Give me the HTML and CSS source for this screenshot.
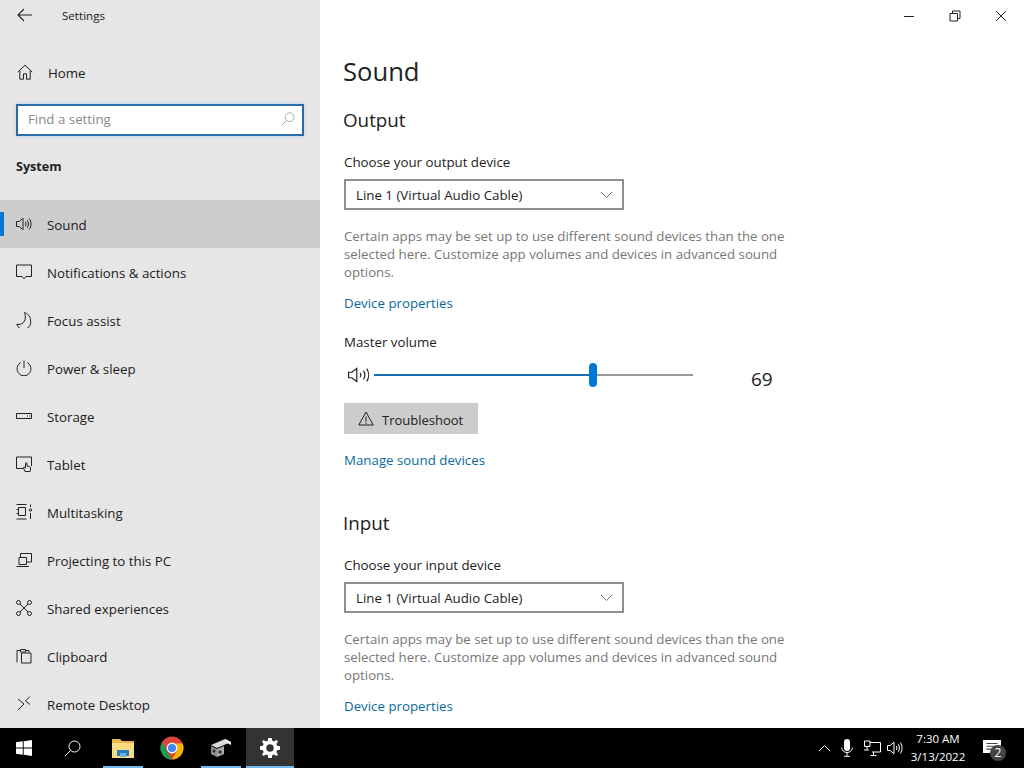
FILE: index.html
```html
<!DOCTYPE html>
<html lang="en">
<head>
<meta charset="utf-8">
<title>Settings</title>
<link rel="stylesheet" href="styles.css">
</head>
<body>
<div class="window">
  <aside class="sidebar">
    <div class="titlebar">
      <svg class="back" width="16" height="14" viewBox="0 0 16 14"><path d="M7 1 1 7l6 6M1 7h14"/></svg>
      <span class="app-title">Settings</span>
    </div>
    <a class="home">
      <svg class="ico" width="16" height="16" viewBox="0 0 16 16"><path d="M.8 8 8 1.2 15.2 8M2.8 6.5v8.7h3.7V9.8h3v5.4h3.7V6.5"/></svg>
      <span>Home</span>
    </a>
    <div class="search">
      <span class="placeholder">Find a setting</span>
      <svg class="search-ico" width="14" height="14" viewBox="0 0 14 14"><circle cx="8.6" cy="5.2" r="4.4"/><path d="M5.5 8.3.7 13.3"/></svg>
    </div>
    <div class="group">System</div>
    <nav class="nav">
      <a class="item active">
        <svg class="ico" width="16" height="16" viewBox="0 0 16 16"><path d="M.5 5.5h2.700L7 2.200v11.600L3.200 10.500H.500zM9.300 6c.8 1.200.8 2.800 0 4M11.200 4.200c1.600 2.200 1.600 5.400 0 7.600M13.200 2.500c2.400 3.200 2.400 7.800 0 11"/></svg>
        <span>Sound</span>
      </a>
      <a class="item">
        <svg class="ico" width="16" height="16" viewBox="0 0 16 16"><path d="M.5 1h15v11.500H10L8 14.800l-2-2.300H.500z"/></svg>
        <span>Notifications &amp; actions</span>
      </a>
      <a class="item">
        <svg class="ico" width="16" height="16" viewBox="0 0 16 16"><path d="M8.500.5c2.700 1 6 3.300 6 7.500a6.700 6.700 0 0 1-13.800 4.300c3.500.6 6.500-.6 7.800-3.300C9.700 6.700 9.500 3 8.500.5z"/></svg>
        <span>Focus assist</span>
      </a>
      <a class="item">
        <svg class="ico" width="16" height="16" viewBox="0 0 16 16"><path d="M8 .5v7.500M4.700 2.600a7 7 0 1 0 6.600 0"/></svg>
        <span>Power &amp; sleep</span>
      </a>
      <a class="item">
        <svg class="ico" width="16" height="16" viewBox="0 0 16 16"><path d="M.5 5.500h15v5h-15z"/><path d="M11 8h1M13 8h1"/></svg>
        <span>Storage</span>
      </a>
      <a class="item">
        <svg class="ico" width="16" height="16" viewBox="0 0 16 16"><path d="M7 12.500H.500V1h15v9"/><path d="M9 15.500 7.500 12c-.3-1 .5-1.300 1-.8l1 1V7.500c0-1.200 1.500-1.200 1.500 0V10l2.500.5c.8.200 1 .8 1 1.500v2l-.5 1.500z"/></svg>
        <span>Tablet</span>
      </a>
      <a class="item">
        <svg class="ico" width="16" height="16" viewBox="0 0 16 16"><path d="M.5.500h10M.500 15h10M2.500 3.500h7v8h-7zM.500 5.500h2M.500 9.500h2M14.500.500v2.500M14.500 9v6"/><circle cx="14.500" cy="6" r="1.200"/></svg>
        <span>Multitasking</span>
      </a>
      <a class="item">
        <svg class="ico" width="16" height="16" viewBox="0 0 16 16"><path d="M4.500 5V1.500h11v8.500H11M3 5.500h7.500v7H3zM.500 14.500h12.500"/></svg>
        <span>Projecting to this PC</span>
      </a>
      <a class="item">
        <svg class="ico" width="16" height="16" viewBox="0 0 16 16"><circle cx="2.500" cy="2.500" r="2"/><circle cx="13.500" cy="2.500" r="2"/><circle cx="2.500" cy="13.500" r="2"/><circle cx="13.500" cy="13.500" r="2"/><path d="M4 4l8 8M12 4l-8 8"/></svg>
        <span>Shared experiences</span>
      </a>
      <a class="item">
        <svg class="ico" width="16" height="16" viewBox="0 0 16 16"><path d="M1 14.500V2.500h3M10 2.500h3v2M5.500 5h9.500v10H5.500zM4.500 4h5V1.500h-5z"/></svg>
        <span>Clipboard</span>
      </a>
      <a class="item">
        <svg class="ico" width="16" height="16" viewBox="0 0 16 16"><path d="M2 3l6 5-6 6M14 .5 9.500 5l4.500 3.500"/></svg>
        <span>Remote Desktop</span>
      </a>
    </nav>
  </aside>

  <main class="content">
    <div class="controls">
      <svg class="ctl" width="12" height="12" viewBox="0 0 12 12"><path d="M1 6.500h10"/></svg>
      <svg class="ctl" width="12" height="12" viewBox="0 0 12 12"><path d="M1 3.500h7.500V11H1zM3.500 3.500V1H11v7.500H8.500"/></svg>
      <svg class="ctl" width="12" height="12" viewBox="0 0 12 12"><path d="M1 1l10 10M11 1 1 11"/></svg>
    </div>
    <h1 class="page-title">Sound</h1>
    <h2 class="section first">Output</h2>
    <div class="label">Choose your output device</div>
    <div class="select">
      <span>Line 1 (Virtual Audio Cable)</span>
      <svg class="chev" width="13" height="8" viewBox="0 0 13 8"><path d="M1 1l5.500 5.500L12 1"/></svg>
    </div>
    <p class="help">Certain apps may be set up to use different sound devices than the one selected here. Customize app volumes and devices in advanced sound options.</p>
    <a class="link">Device properties</a>
    <div class="label master">Master volume</div>
    <div class="volume">
      <svg class="ico vol-ico" width="22" height="18" viewBox="0 0 20 16"><path d="M.5 5.500h3L8 2v12l-4.500-3.500h-3zM11 6c.8 1.200.8 2.800 0 4M14 4c1.600 2.400 1.600 5.600 0 8M17 2.200c2.300 3.400 2.300 8.200 0 11.600"/></svg>
      <div class="slider">
        <div class="fill" style="width:67.5%"></div>
        <div class="rest"></div>
        <div class="thumb" style="left:67.4%"></div>
      </div>
      <span class="value">69</span>
    </div>
    <button class="trouble">
      <svg class="ico" width="16" height="15" viewBox="0 0 16 15"><path d="M8 1 15.200 14H.800zM8 5.500v5M8 11.500v1.300"/></svg>
      <span>Troubleshoot</span>
    </button>
    <a class="link manage">Manage sound devices</a>
    <h2 class="section second">Input</h2>
    <div class="label">Choose your input device</div>
    <div class="select">
      <span>Line 1 (Virtual Audio Cable)</span>
      <svg class="chev" width="13" height="8" viewBox="0 0 13 8"><path d="M1 1l5.500 5.500L12 1"/></svg>
    </div>
    <p class="help">Certain apps may be set up to use different sound devices than the one selected here. Customize app volumes and devices in advanced sound options.</p>
    <a class="link">Device properties</a>
  </main>
</div>

<footer class="taskbar">
  <div class="tb-left">
    <div class="tb-btn">
      <svg width="16" height="16" viewBox="0 0 16 16"><path class="white" d="M0 2.300 6.800 1.300v6.300H0zM7.700 1.200 16 0v7.600H7.700zM0 8.500h6.800v6.300L0 13.800zM7.700 8.500H16V16l-8.300-1.200z"/></svg>
    </div>
    <div class="tb-btn">
      <svg class="line-w" width="17" height="17" viewBox="0 0 17 17"><circle cx="10.500" cy="6.500" r="5.500"/><path d="M6.500 10.500.800 16.200"/></svg>
    </div>
    <div class="tb-apps">
      <div class="tb-btn open short">
        <svg width="22" height="20" viewBox="0 0 22 20"><path fill="#e8b64a" d="M0 1h8l2 2h12v3H0z"/><path fill="#f8dc84" d="M0 5h22v15H0z"/><path fill="#2b7cc4" d="M5 12h12v6h-3v-3H8v3H5z"/><path fill="#6fb1dd" d="M8 15h6v4H8z"/></svg>
      </div>
      <div class="tb-btn">
        <svg width="24" height="24" viewBox="0 0 24 24"><circle cx="12" cy="12" r="11.500" fill="#db4437"/><path fill="#0f9d58" d="M12 23.500A11.500 11.500 0 0 1 2 6.300L7 14.900l4.500 8.600z"/><path fill="#f4b400" d="M22.500 7.400A11.500 11.500 0 0 1 12 23.500L16.500 15 12 7.400z"/><circle cx="12" cy="12" r="5.400" fill="#fff"/><circle cx="12" cy="12" r="4.100" fill="#4285f4"/></svg>
      </div>
      <div class="tb-btn open short">
        <svg width="22" height="20" viewBox="0 0 22 20"><path fill="#d9d9d9" d="M1 7 15 1l6 3-14 6z"/><path fill="#8c8c8c" d="M1 8l6 3v8l-6-3z"/><path fill="#a8a8a8" d="M7 11l7-3v8l-7 3z"/><path fill="#f0f0f0" d="M15 1l6 3v3l-6-3z"/><circle cx="4" cy="13" r="1.500" fill="#333"/><circle cx="10" cy="14" r="1.800" fill="#333"/></svg>
      </div>
      <div class="tb-btn open current">
        <svg width="20" height="20" viewBox="0 0 20 20"><path class="white" fill-rule="evenodd" d="M8.200 0h3.600l.5 2.800 1.700.7L16.400 2 18 3.600l-1.600 2.400.7 1.700 2.900.5v3.600l-2.900.5-.7 1.700 1.600 2.400-1.600 1.600-2.400-1.600-1.700.7-.5 2.900H8.200l-.5-2.900-1.700-.7-2.400 1.600L2 16.400 3.600 14l-.7-1.700L0 11.800V8.200l2.900-.5.700-1.700L2 3.600 3.600 2 6 3.500l1.700-.7zM10 6.300a3.700 3.700 0 1 0 0 7.400 3.700 3.700 0 0 0 0-7.400z"/></svg>
      </div>
    </div>
  </div>
  <div class="tray">
    <svg class="line-w chevron" width="13" height="8" viewBox="0 0 13 8"><path d="M1 7l5.500-5.500L12 7"/></svg>
    <svg class="mic" width="12" height="18" viewBox="0 0 12 18"><rect class="white" x="3" y="0" width="6" height="12" rx="3"/><path class="line-w" d="M.7 8.500c0 3 2.300 5 5.300 5s5.300-2 5.300-5M6 13.500V17M3 17.300h6"/></svg>
    <svg class="line-w net" width="17" height="16" viewBox="0 0 17 16"><path d="M.5 1h5.500v5.500H.500zM3 6.500v3M0 10h5M6 2.500h10.500v9.500H8M9.500 12v3M6.500 15.500h6"/></svg>
    <svg class="line-w speaker" width="16" height="16" viewBox="0 0 16 16"><path d="M.5 5.500h2.700L7 2.200v11.600L3.200 10.500H.500zM9.300 6c.8 1.200.8 2.800 0 4M11.200 4.200c1.600 2.200 1.600 5.400 0 7.600M13.200 2.500c2.400 3.200 2.400 7.800 0 11"/></svg>
    <div class="clock"><div>7:30 AM</div><div>3/13/2022</div></div>
    <div class="notif">
      <svg width="18" height="17" viewBox="0 0 16 15"><path class="white" d="M0 0h16v11.500h-6L7.500 14.500v-3H0z"/><path class="dark-line" d="M3 3h10M3 5.500h10M3 8h7"/></svg>
      <span class="badge">2</span>
    </div>
  </div>
</footer>
</body>
</html>
```

FILE: styles.css
```css
* { box-sizing: border-box; }
html, body { margin: 0; height: 768px; overflow: hidden; }
body {
  display: flex;
  flex-direction: column;
  font-family: "Open Sans", "Noto Sans", "Liberation Sans", sans-serif;
  font-size: 13.3px;
  color: #1c1c1c;
  background: #fff;
}
svg { display: block; flex: none; fill: none; }

.window { flex: none; height: 728px; display: flex; overflow: hidden; }

/* Sidebar */
.sidebar { flex: none; width: 320px; background: #e6e6e6; overflow: hidden; }
.titlebar { height: 32px; display: flex; align-items: center; padding-left: 17px; }
.back { stroke: #222; stroke-width: 1.1; margin-top: -2px; }
.app-title { margin-left: 29px; padding-bottom: 2px; font-size: 11.6px; color: #222; }

.ico { stroke: #222; stroke-width: 1; }
.home { height: 48px; margin-top: 16px; display: flex; align-items: center; padding-left: 17px; gap: 15px; }
.home span, .item span { padding-top: 2px; }
.search {
  height: 32px; margin: 8px 16px 0; padding: 0 7px 2px 10px;
  display: flex; align-items: center; justify-content: space-between;
  background: #fff; border: 2px solid #2b6ca6;
  box-shadow: 0 0 4px rgba(90, 170, 230, .3);
}
.placeholder { color: #8a8a8a; }
.search-ico { stroke: #a8a8a8; stroke-width: 1; }
.group { height: 64px; padding: 21px 16px 0; font-weight: 700; font-size: 12.6px; line-height: 20px; color: #222; }

.nav { display: flex; flex-direction: column; }
.item { flex: none; height: 48px; display: flex; align-items: center; padding-left: 16px; gap: 15px; position: relative; }
.active { background: #cdcdcd; }
.active::before { content: ""; position: absolute; left: 0; top: 12px; width: 4px; height: 24px; background: #0078d7; }

/* Content */
.content { flex: 1; min-width: 0; padding-left: 24px; overflow: hidden; }
.controls { height: 32px; display: flex; justify-content: flex-end; align-items: center; gap: 34px; padding-right: 17px; }
.ctl { stroke: #222; stroke-width: 1; }
.page-title { margin: 20px 0 0 -1px; height: 40px; font-size: 25.6px; line-height: 40px; font-weight: 400; color: #222; }
.section { margin: 0 0 0 -1px; font-size: 18.8px; line-height: 28px; font-weight: 400; color: #222; }
.section.first { height: 28px; margin-top: 14px; }
.section.second { height: 28px; margin-top: 39px; }
.label { height: 20px; line-height: 20px; margin-top: 18px; }
.label.master { margin-top: 19px; }
.select {
  width: 280px; height: 31px; margin-top: 7px; padding: 0 9px 0 10px;
  display: flex; align-items: center; justify-content: space-between;
  border: 2px solid #8e8e8e; background: #fff;
}
.chev { stroke: #666; stroke-width: 1; }
.help { width: 452px; height: 55px; margin: 17px 0 0; font-size: 13.25px; line-height: 18.2px; color: #767676; }
.link { display: block; height: 20px; line-height: 20px; margin-top: 11px; color: #0b6a9e; }

.volume { height: 36px; margin-top: 5px; display: flex; align-items: center; padding-left: 4px; position: relative; }
.vol-ico { stroke-width: 1.1; }
.slider { width: 319px; height: 2px; margin-left: 4px; position: relative; display: flex; }
.fill { background: #1a6fb0; }
.rest { flex: 1; background: #999; }
.thumb { position: absolute; top: -11px; width: 8px; height: 24px; border-radius: 4px; background: #0078d7; }
.value { position: absolute; left: 407px; top: 10px; font-size: 19px; line-height: 24px; color: #222; }

.trouble {
  width: 134px; height: 31px; margin-top: 10px; padding: 0 0 0 14px;
  display: flex; align-items: center; gap: 8px;
  border: 0; background: #ccc; color: #222;
  font: inherit;
  font-size: 13px;
}
.trouble span { padding-top: 2px; }
.link.manage { margin-top: 16px; }

/* Taskbar */
.taskbar { flex: none; height: 40px; background: #000; display: flex; justify-content: space-between; }
.tb-left { display: flex; }
.tb-apps { display: flex; gap: 1px; margin-left: 3px; }
.tb-btn { width: 48px; height: 40px; display: flex; align-items: center; justify-content: center; position: relative; }
.white { fill: #fff; }
.line-w { stroke: #fff; stroke-width: 1; }
.open::after { content: ""; position: absolute; left: 0; right: 0; bottom: 0; height: 2px; background: #76b9ed; }
.open.short::after { left: 4px; right: 4px; }
.current { background: #333; }

.tray { display: flex; align-items: center; color: #fff; }
.chevron { margin-right: 10px; }
.mic { margin-right: 11px; }
.net { margin-right: 6px; }
.clock { width: 60px; margin: 0 8px 0 5px; text-align: center; font-size: 11.5px; line-height: 18px; }
.notif { width: 48px; height: 40px; position: relative; display: flex; align-items: center; padding-left: 7px; }
.dark-line { stroke: #444; stroke-width: 1; }
.badge {
  position: absolute; left: 14px; top: 17px; width: 16px; height: 16px; border-radius: 50%;
  background: #444; font-size: 12px; line-height: 16px; text-align: center; color: #fff;
}
```
